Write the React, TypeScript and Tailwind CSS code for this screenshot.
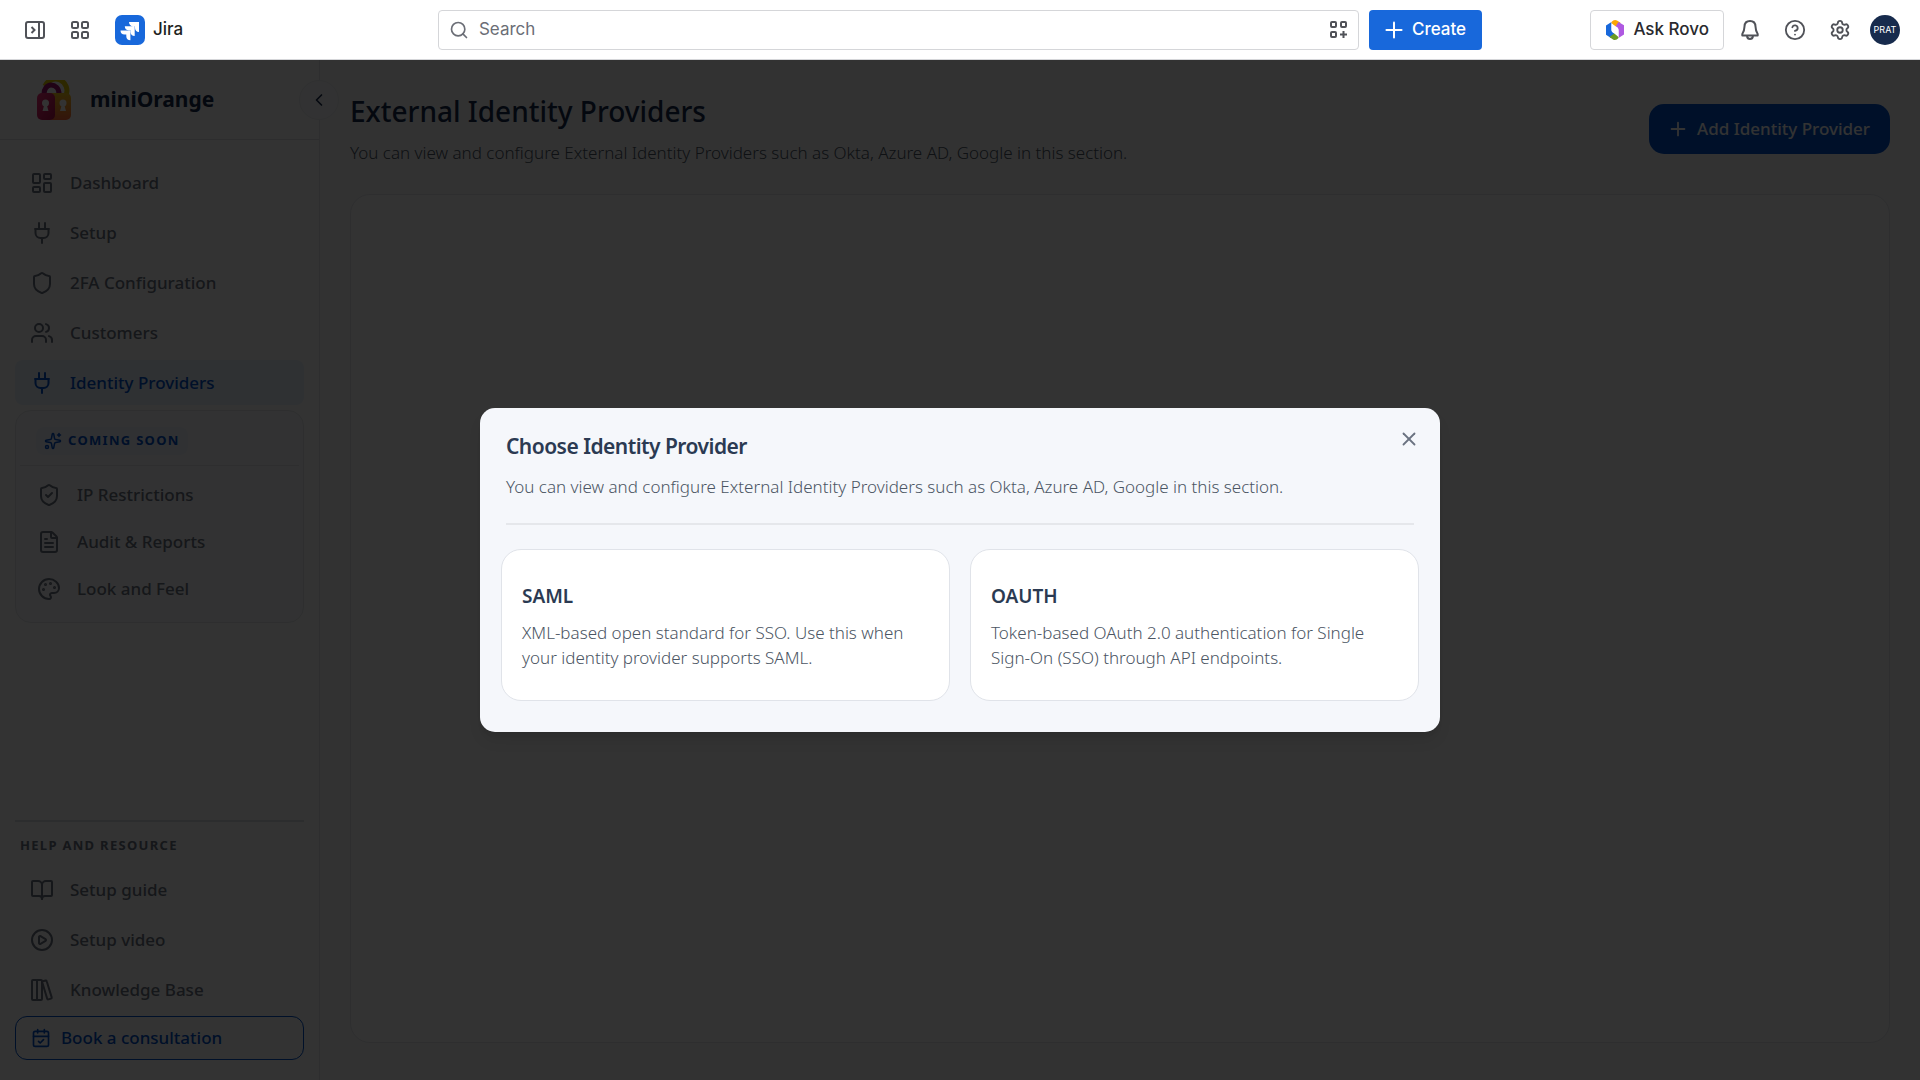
import type { ReactNode } from "react"
import {
  BookOpen,
  CalendarCheck,
  ChevronLeft,
  CircleHelp,
  CirclePlay,
  FileText,
  LayoutDashboard,
  Palette,
  Plus,
  Search,
  Settings,
  Shield,
  ShieldCheck,
  Sparkles,
  Users,
  X,
} from "lucide-react"

interface NavEntry {
  label: string
  icon: ReactNode
  active?: boolean
}

interface ProviderOption {
  title: string
  description: string
}

const PlugIcon = () => (
  <svg
    width="24"
    height="24"
    viewBox="0 0 24 24"
    fill="none"
    stroke="currentColor"
    strokeWidth="2"
    strokeLinecap="round"
    strokeLinejoin="round"
  >
    <path d="M9 8V2M15 8V2M12 17v5M5 8h14M18.500 8v4a5 5 0 0 1-5 5h-3a5 5 0 0 1-5-5V8" />
  </svg>
)

const LibraryIcon = () => (
  <svg
    width="24"
    height="24"
    viewBox="0 0 24 24"
    fill="none"
    stroke="currentColor"
    strokeWidth="2"
    strokeLinejoin="round"
  >
    <rect x="2" y="2" width="5" height="20" rx="1" />
    <path d="M7 2h4a1 1 0 0 1 1 1v18a1 1 0 0 1-1 1H7z" />
    <path d="m12 3.500 3.500-1a1 1 0 0 1 1.200.7l5 16.200a1 1 0 0 1-.7 1.200l-2.600.8a1 1 0 0 1-1.200-.7z" />
  </svg>
)

const mainNav: NavEntry[] = [
  { label: "Dashboard", icon: <LayoutDashboard size={24} /> },
  { label: "Setup", icon: <PlugIcon /> },
  { label: "2FA Configuration", icon: <Shield size={24} /> },
  { label: "Customers", icon: <Users size={24} /> },
  { label: "Identity Providers", icon: <PlugIcon />, active: true },
]

const comingSoon: NavEntry[] = [
  { label: "IP Restrictions", icon: <ShieldCheck size={24} /> },
  { label: "Audit & Reports", icon: <FileText size={24} /> },
  { label: "Look and Feel", icon: <Palette size={24} /> },
]

const helpNav: NavEntry[] = [
  { label: "Setup guide", icon: <BookOpen size={24} /> },
  { label: "Setup video", icon: <CirclePlay size={24} /> },
  { label: "Knowledge Base", icon: <LibraryIcon /> },
]

const options: ProviderOption[] = [
  {
    title: "SAML",
    description:
      "XML-based open standard for SSO. Use this when your identity provider supports SAML.",
  },
  {
    title: "OAUTH",
    description:
      "Token-based OAuth 2.0 authentication for Single Sign-On (SSO) through API endpoints.",
  },
]

function TopBar() {
  return (
    <header className="flex h-[60px] items-center justify-between border-b border-[#d5d6d9] bg-white px-5 font-['Inter',sans-serif] text-[#505258]">
      <div className="flex w-[417px] items-center">
        <button
          aria-label="Expand sidebar"
          className="flex size-[30px] items-center justify-center"
        >
          <svg
            width="20"
            height="18"
            viewBox="0 0 20 18"
            fill="none"
            stroke="currentColor"
            strokeWidth="2"
          >
            <rect x="1" y="1" width="18" height="16" rx="2" />
            <path d="M14 1v16M6.500 6l3 3-3 3" />
          </svg>
        </button>
        <button
          aria-label="Switch sites or apps"
          className="ml-[15px] flex size-[30px] items-center justify-center"
        >
          <svg
            width="18"
            height="18"
            viewBox="0 0 18 18"
            fill="none"
            stroke="currentColor"
            strokeWidth="2"
          >
            <rect x="1" y="1" width="6" height="6" rx="1.5" />
            <rect x="11" y="1" width="6" height="6" rx="1.5" />
            <rect x="1" y="11" width="6" height="6" rx="1.5" />
            <rect x="11" y="11" width="6" height="6" rx="1.5" />
          </svg>
        </button>
        <a
          href="#"
          className="ml-5 flex items-center gap-2 text-[17px] font-medium text-[#1e1f21]"
        >
          <svg width="30" height="30" viewBox="0 0 30 30">
            <rect width="30" height="30" rx="7" fill="#1868db" />
            <path
              fill="#fff"
              d="M14 7h10v10c-2.600 0-4-1.700-4-4v-1.800h-1.900c-2.500 0-4.100-1.700-4.100-4.200zM9.800 11.300h9.900v9.800c-2.500 0-4.100-1.600-4.100-4v-1.800h-1.800c-2.500 0-4-1.600-4-4zM5.500 15.500h9.900v9.800c-2.500 0-4.100-1.600-4.100-4v-1.800H9.500c-2.500 0-4-1.600-4-4z"
            />
          </svg>
          Jira
        </a>
      </div>

      <div className="flex flex-1 items-center justify-center gap-[10px]">
        <div className="flex h-10 w-full max-w-[921px] items-center rounded border border-[#d5d6d9] px-[10px]">
          <Search size={20} className="text-[#6b6e76]" />
          <input
            type="search"
            aria-label="Search"
            placeholder="Search"
            className="ml-[10px] flex-1 bg-transparent text-[17px] placeholder:text-[#6b6e76] focus:outline-none"
          />
          <button aria-label="Add apps">
            <svg
              width="18"
              height="18"
              viewBox="0 0 18 18"
              fill="none"
              stroke="currentColor"
              strokeWidth="2"
            >
              <rect x="1" y="1" width="5" height="5" rx="1" />
              <rect x="11" y="1" width="5" height="5" rx="1" />
              <rect x="1" y="11" width="5" height="5" rx="1" />
              <path d="M13.500 10v7M10 13.500h7" />
            </svg>
          </button>
        </div>
        <button className="flex h-10 items-center gap-[5px] rounded bg-[#1868db] pr-4 pl-3 text-[17px] font-medium text-white">
          <Plus size={26} strokeWidth={2} absoluteStrokeWidth />
          Create
        </button>
      </div>

      <div className="flex w-[417px] items-center justify-end gap-[15px]">
        <button className="-mr-1 flex h-10 items-center gap-2 rounded border border-[#d5d6d9] px-[14px] text-[17px] font-medium text-[#292a2e]">
          <svg width="20" height="20" viewBox="0 0 20 20">
            <path fill="#1868db" d="M1 5.500 6.500 2v7.500c0 1.500.5 2.500 1.800 3.200l2 1.200L6 18 1 14.700z" />
            <path fill="#fca700" d="M6.500 3V2C8 .3 10-.6 12 .6L15.500 2.800 13 6.500 11 8z" />
            <path fill="#af59e1" d="M13.500 2 19 5.300v9.200L13.500 18v-7.500c0-1.500-.5-2.500-1.800-3.200L10.500 6.500z" />
            <path fill="#6a9a23" d="m4.500 17 5-3.800c2 1 3.500 2 4 4.800-1.500 1.700-3.500 2.600-5.500 1.400z" />
            <path fill="#fff" d="M6.500 3.500 11 6.600c1.800.9 2.500 2 2.500 3.900V17L9 13.200c-1.800-.9-2.500-1.700-2.500-3.700z" />
          </svg>
          Ask Rovo
        </button>
        <button
          aria-label="Notifications"
          className="flex size-[30px] items-center justify-center"
        >
          <svg
            width="20"
            height="22"
            viewBox="0 0 20 22"
            fill="none"
            stroke="currentColor"
            strokeWidth="2"
            strokeLinejoin="round"
          >
            <path d="M10 2C6.500 2 4.600 4.300 4.500 7.500 4.400 11.500 4 12.500 2.300 15v1.500h15.400V15c-1.700-2.500-2.100-3.500-2.200-7.500C15.400 4.300 13.500 2 10 2z" />
            <path d="M7 17c.3 2 1.500 3 3 3s2.700-1 3-3" />
          </svg>
        </button>
        <button
          aria-label="Help"
          className="flex size-[30px] items-center justify-center"
        >
          <CircleHelp size={22} />
        </button>
        <button
          aria-label="Settings"
          className="flex size-[30px] items-center justify-center"
        >
          <Settings size={22} />
        </button>
        <button
          aria-label="Account"
          className="flex size-[30px] items-center justify-center rounded-full bg-[#172b4d] text-[9px] text-white"
        >
          PRAT
        </button>
      </div>
    </header>
  )
}

function BrandLogo() {
  return (
    <svg width="36" height="40" viewBox="0 0 36 40">
      <defs>
        <linearGradient id="lock-right" x1="0" y1="0" x2="0" y2="1">
          <stop offset="0" stopColor="#f5c518" />
          <stop offset="1" stopColor="#ff6a3a" />
        </linearGradient>
        <linearGradient id="lock-left" x1="0" y1="0" x2="1" y2="1">
          <stop offset="0" stopColor="#f0307a" />
          <stop offset="1" stopColor="#b01048" />
        </linearGradient>
      </defs>
      <path d="M9 6a11 11 0 0 1 21 9" fill="none" stroke="#e0c800" strokeWidth="5" />
      <path d="M8 14c0-5 3-9 7-9s8 3 8 9" fill="none" stroke="#a01070" strokeWidth="5" />
      <rect x="11" y="13" width="24" height="27" rx="5" fill="url(#lock-right)" />
      <rect x="1" y="13" width="18" height="27" rx="5" fill="url(#lock-left)" />
      <circle cx="9.500" cy="23" r="3.500" fill="#fff" />
      <path d="M8.500 24h2l2 7h-6z" fill="#fff" />
      <circle cx="27" cy="23" r="3.500" fill="#fff" />
      <path d="M26 24h2l2 7h-6z" fill="#fff" />
    </svg>
  )
}

function NavItem({ label, icon, active }: NavEntry) {
  return (
    <a
      href="#"
      className={`flex h-[45px] items-center gap-4 rounded-lg px-[15px] text-[17px] font-medium ${
        active ? "bg-[#e9f2fe] text-[#0052cc]" : "text-[#6b7280]"
      }`}
    >
      {icon}
      {label}
    </a>
  )
}

function Sidebar() {
  return (
    <aside className="relative flex w-80 shrink-0 flex-col border-r border-[#e5e7eb] bg-white">
      <div className="flex h-20 items-center gap-[18px] border-b border-[#dfe1e6] px-9 text-[21px] font-bold text-[#172b4d]">
        <BrandLogo />
        miniOrange
      </div>
      <button
        aria-label="Collapse menu"
        className="absolute top-5 -right-5 flex size-10 items-center justify-center rounded-full border border-[#eceef2] bg-[#fafbfc] text-[#172b4d]"
      >
        <ChevronLeft size={20} />
      </button>

      <nav className="flex flex-col gap-[5px] px-[15px] pt-5">
        {mainNav.map((item) => (
          <NavItem key={item.label} {...item} />
        ))}

        <div className="rounded-2xl border border-[#e5e7eb] bg-[#fafbfc] pb-[11px]">
          <div className="mx-1 border-b border-[#e5e7eb] px-4 pt-4 pb-[9px]">
            <span className="inline-flex h-7 items-center gap-[6px] rounded-lg bg-[#f0f5fd] px-2 text-[13px] font-bold tracking-widest text-[#0052cc]">
              <Sparkles size={18} />
              COMING SOON
            </span>
          </div>
          <div className="flex flex-col gap-[2px] px-[6px] pt-[6px]">
            {comingSoon.map((item) => (
              <NavItem key={item.label} {...item} />
            ))}
          </div>
        </div>
      </nav>

      <div className="mt-auto px-[15px] pb-5">
        <div className="border-t-2 border-[#dde1e6] px-[5px] pt-[14px] pb-3 text-[13px] font-bold tracking-widest text-[#6b7280]">
          HELP AND RESOURCE
        </div>
        <nav className="flex flex-col gap-[5px]">
          {helpNav.map((item) => (
            <NavItem key={item.label} {...item} />
          ))}
        </nav>
        <a
          href="#"
          className="mt-1 flex h-11 items-center gap-[10px] rounded-xl border border-[#0052cc] px-[15px] text-[17px] font-medium text-[#0052cc]"
        >
          <CalendarCheck size={20} />
          Book a consultation
        </a>
      </div>
    </aside>
  )
}

function ProviderDialog() {
  return (
    <div
      role="dialog"
      aria-labelledby="dialog-title"
      className="relative w-full max-w-[960px] rounded-[15px] bg-[#f5f7fb] px-[21px] pt-[22px] pb-[31px] shadow-lg"
    >
      <button
        aria-label="Close"
        className="absolute top-5 right-5 text-[#6b7280]"
      >
        <X size={22} strokeWidth={2} />
      </button>
      <div className="mx-[5px] border-b-2 border-[#e5e7eb] pb-6">
        <h2
          id="dialog-title"
          className="text-[21px] leading-[32px] font-semibold tracking-tight text-[#2b3a52]"
        >
          Choose Identity Provider
        </h2>
        <p className="mt-3 text-[17px] leading-[25px] font-light text-[#4b5563]">
          You can view and configure External Identity Providers such as Okta,
          Azure AD, Google in this section.
        </p>
      </div>
      <div className="mt-6 grid grid-cols-2 gap-5">
        {options.map((option) => (
          <button
            key={option.title}
            className="rounded-[20px] border border-[#e0e3e9] bg-white px-5 pt-8 pb-[30px] text-left"
          >
            <h3 className="text-[19px] leading-[28px] font-semibold text-[#2b3a52]">
              {option.title}
            </h3>
            <p className="mt-[10px] text-[17px] leading-[25px] font-light text-[#4b5563]">
              {option.description}
            </p>
          </button>
        ))}
      </div>
    </div>
  )
}

export default function App() {
  return (
    <div className="flex min-h-screen flex-col font-['Noto_Sans',sans-serif]">
      <TopBar />
      <div className="relative flex flex-1 bg-[#f8f9fb]">
        <Sidebar />
        <main className="flex flex-1 flex-col px-[30px] pt-8 pb-[37px]">
          <div className="flex items-center justify-between">
            <div>
              <h1 className="text-[28px] leading-[38px] font-medium text-[#172b4d]">
                External Identity Providers
              </h1>
              <p className="mt-[10px] text-[17px] leading-[25px] font-light text-[#4b5563]">
                You can view and configure External Identity Providers such as
                Okta, Azure AD, Google in this section.
              </p>
            </div>
            <button className="flex h-[50px] items-center gap-2 rounded-[15px] bg-[#0052cc] pr-5 pl-[18px] text-[17px] font-medium text-white">
              <Plus size={22} strokeWidth={2} />
              Add Identity Provider
            </button>
          </div>
          <div className="mt-[29px] flex-1 rounded-[20px] border border-[#e5e7eb] bg-white" />
        </main>

        <div className="absolute inset-0 flex items-center justify-center bg-black/80">
          <ProviderDialog />
        </div>
      </div>
    </div>
  )
}
